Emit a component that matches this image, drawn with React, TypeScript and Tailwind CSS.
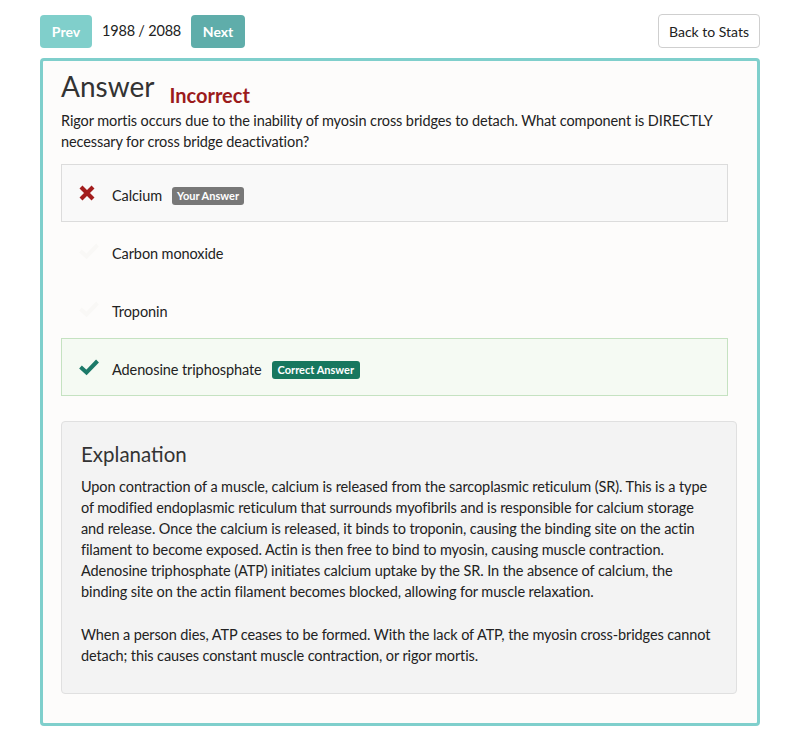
import React from 'react';

type Option = {
    label: string;
    state: 'wrong' | 'correct' | 'none';
};

const options: Option[] = [
    { label: 'Calcium', state: 'wrong' },
    { label: 'Carbon monoxide', state: 'none' },
    { label: 'Troponin', state: 'none' },
    { label: 'Adenosine triphosphate', state: 'correct' },
];

const CrossIcon = () => (
    <svg width="18" height="18" viewBox="0 0 18 18" className="text-[#a31d1d]">
        <path d="M3 3 L15 15 M15 3 L3 15" stroke="currentColor" strokeWidth="4.2" strokeLinecap="butt" />
    </svg>
);

const CheckIcon = ({ className }: { className: string }) => (
    <svg width="22" height="18" viewBox="0 0 22 18" className={className}>
        <path d="M2.5 9 L8.5 14.5 L19.5 3" stroke="currentColor" strokeWidth="4" fill="none" strokeLinejoin="miter" />
    </svg>
);

const OptionRow: React.FC<{ option: Option }> = ({ option }) => {
    const box =
        option.state === 'wrong'
            ? 'border border-[#dcdcdc] bg-[#f9f9f9]'
            : option.state === 'correct'
              ? 'border border-[#c5e2c1] bg-[#f5faf3]'
              : 'border border-transparent';

    return (
        <div className={`flex h-[58px] items-center pl-[16px] pt-[6px] ${box}`}>
            <div className="-mt-[7px] flex w-[34px] items-center">
                {option.state === 'wrong' && <CrossIcon />}
                {option.state === 'correct' && <CheckIcon className="text-[#1c7a69]" />}
                {option.state === 'none' && <CheckIcon className="text-[#f9f8f6]" />}
            </div>
            <span className="text-[14.5px] tracking-[-0.1px] text-[#222]">{option.label}</span>
            {option.state === 'wrong' && (
                <span className="ml-[10px] rounded-[3px] bg-[#787878] px-[5px] py-[2px] text-[11px] font-bold leading-[14px] text-white">
                    Your Answer
                </span>
            )}
            {option.state === 'correct' && (
                <span className="ml-[10px] rounded-[3px] bg-[#17775f] px-[6px] py-[2px] text-[11px] font-bold leading-[14px] text-white">
                    Correct Answer
                </span>
            )}
        </div>
    );
};

export default function App() {
    return (
        <div className="min-h-[750px] w-[800px] bg-white font-['Lato','Liberation_Sans',sans-serif] text-[#222]">
            <div className="px-[40px] pt-[14px]">
                <div className="flex items-center justify-between">
                    <div className="flex items-center">
                        <button className="h-[33px] w-[52px] rounded-[4px] bg-[#80cfcb] text-[14px] font-bold text-white">
                            Prev
                        </button>
                        <span className="ml-[10px] mr-[10px] text-[14.5px] tracking-[-0.2px] text-[#222]">
                            1988 / 2088
                        </span>
                        <button className="h-[33px] w-[54px] rounded-[4px] bg-[#5fadaa] text-[14px] font-bold text-white">
                            Next
                        </button>
                    </div>
                    <button className="h-[34px] w-[102px] rounded-[4px] border border-[#cfcfcf] bg-white text-[14px] text-[#222]">
                        Back to Stats
                    </button>
                </div>

                <div className="mt-[10px] h-[668px] rounded-[4px] border-[3px] border-[#7fcfcc] bg-[#fdfcfb] pl-[18px] pr-[27px] pt-[7px]">
                    <div className="flex items-end">
                        <h1 className="text-[28px] leading-[36px] text-[#333]">Answer</h1>
                        <span className="mb-[-6px] ml-[15px] text-[20px] font-bold leading-[30px] text-[#9b1b1b]">
                            Incorrect
                        </span>
                    </div>
                    <p className="mt-[6px] text-[14.5px] leading-[21px] tracking-[-0.1px] text-[#222]">
                        Rigor mortis occurs due to the inability of myosin cross bridges to detach. What component is
                        DIRECTLY necessary for cross bridge deactivation?
                    </p>

                    <div className="mt-[12px] mr-[2px] flex flex-col">
                        {options.map((option) => (
                            <OptionRow key={option.label} option={option} />
                        ))}
                    </div>

                    <div className="mt-[25px] -mr-[7px] h-[273px] rounded-[4px] border border-[#e0e0e0] bg-[#f3f3f3] px-[19px] pt-[18px]">
                        <h2 className="text-[20.5px] leading-[28px] text-[#333]">Explanation</h2>
                        <p className="mt-[8px] text-[14.5px] leading-[21px] tracking-[-0.1px] text-[#222]">
                            Upon contraction of a muscle, calcium is released from the sarcoplasmic reticulum (SR). This is a
                            type of modified endoplasmic reticulum that surrounds myofibrils and is responsible for calcium
                            storage and release. Once the calcium is released, it binds to troponin, causing the binding site
                            on the actin filament to become exposed. Actin is then free to bind to myosin, causing muscle
                            contraction. Adenosine triphosphate (ATP) initiates calcium uptake by the SR. In the absence of
                            calcium, the binding site on the actin filament becomes blocked, allowing for muscle relaxation.
                        </p>
                        <p className="mt-[22px] text-[14.5px] leading-[21px] tracking-[-0.1px] text-[#222]">
                            When a person dies, ATP ceases to be formed. With the lack of ATP, the myosin cross-bridges cannot
                            detach; this causes constant muscle contraction, or rigor mortis.
                        </p>
                    </div>
                </div>
            </div>
        </div>
    );
}
